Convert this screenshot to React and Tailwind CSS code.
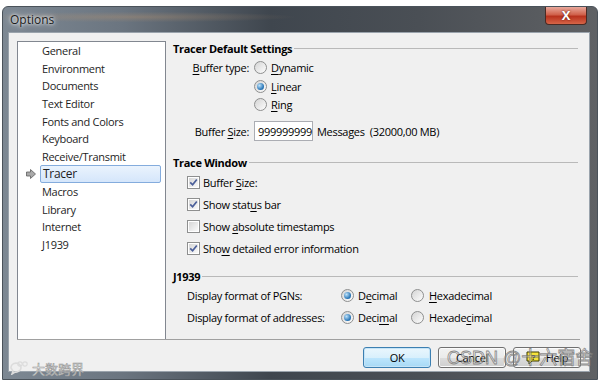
import React from 'react';

const listItems = [
  'General', 'Environment', 'Documents', 'Text Editor', 'Fonts and Colors', 'Keyboard',
  'Receive/Transmit', 'Tracer', 'Macros', 'Library', 'Internet', 'J1939',
];

const U = ({ children }) => <span className="underline underline-offset-[2px] decoration-[1px]">{children}</span>;

const Radio = ({ checked }) => (
  <span className="w-[13px] h-[13px] rounded-full border border-[#8e8f8f] bg-[linear-gradient(135deg,#d4d4d4,#fdfdfd)] flex items-center justify-center shrink-0">
    {checked && (
      <span className="w-[7px] h-[7px] rounded-full bg-[radial-gradient(circle_at_35%_35%,#bfe3fa,#2a77b8_65%,#18548a)]" />
    )}
  </span>
);

const Check = ({ checked }) => (
  <span className="w-[13px] h-[13px] border border-[#8e8f8f] bg-white p-[1px] shrink-0 flex">
    <span className="flex-1 bg-[linear-gradient(135deg,#d6d6d6,#fafafa)] flex items-center justify-center">
      {checked && (
        <svg width="9" height="9" viewBox="0 0 9 9">
          <path d="M1.2 4.3 L3.6 6.8 L7.8 1.4" stroke="#4b5f9a" strokeWidth="1.7" fill="none" />
        </svg>
      )}
    </span>
  </span>
);

const Header = ({ children }) => (
  <div className="h-[14px] flex items-center gap-[2px] font-bold text-black">
    <span>{children}</span>
    <div className="flex-1 h-px bg-[#b9b9b9]" />
  </div>
);

const Button = ({ children, primary }) => (
  <button
    className={
      primary
        ? 'w-[68px] h-[21px] rounded-[3px] border border-[#3c7fb1] bg-[linear-gradient(#eaf6fd,#d9f0fc_50%,#bee6fd_51%,#a7d9f5)] shadow-[inset_0_0_0_1px_#c5e4f7] flex items-center justify-center text-black'
        : 'w-[68px] h-[21px] rounded-[3px] border border-[#707070] bg-[linear-gradient(#f2f2f2,#ebebeb_50%,#dddddd_51%,#cfcfcf)] shadow-[inset_0_0_0_1px_#fbfbfb] flex items-center justify-center gap-[6px] text-black'
    }
  >
    {children}
  </button>
);

const App = () => {
  return (
    <div className="w-[602px] h-[382px] bg-white relative overflow-hidden pt-[6px] pl-[2px] pr-[4px] pb-[2px] font-['Open_Sans',sans-serif] text-[11px] tracking-[-0.3px] leading-none">
      <div className="h-full flex flex-col rounded-t-[6px] border border-[#4a525a] bg-[linear-gradient(90deg,#7d8893_0%,#6b7580_20%,#3f464e_45%,#4a4f55_70%,#5f6164_100%)]">
        <div className="h-[25px] flex items-start justify-between pl-[7px] pr-[10px] bg-[radial-gradient(ellipse_at_22%_40%,rgba(190,150,110,0.35),transparent_25%)]">
          <span className="mt-[7px] text-[12px] tracking-normal text-[#1b1b1b] [text-shadow:0_0_6px_#ffffff,0_0_3px_#ffffff]">Options</span>
          <div className="w-[42px] h-[18px] rounded-b-[4px] border border-t-0 border-[#4a2a24] bg-[linear-gradient(#e9a99c,#d0614b_45%,#b8321d_55%,#d66548)] flex items-center justify-center">
            <span className="font-bold text-[13px] text-white [text-shadow:0_0_2px_#5a1a10]">X</span>
          </div>
        </div>
        <div className="flex-1 ml-[5px] mr-[7px] mb-[7px] bg-[#f0f0f0] border border-[#9aa3ac] flex flex-col pt-[8px] pl-[8px] pr-[9px]">
          <div className="h-[299px] flex border-b border-[#a0a0a0]">
            <div className="w-[149px] bg-white border border-b-0 border-[#828790] flex flex-col text-[#1e1e1e]">
              {listItems.map((item) => (
                <div key={item} className="h-[17.6px] flex items-center relative">
                  {item === 'Tracer' ? (
                    <>
                      <svg className="absolute left-[8px] top-[4px]" width="10" height="10" viewBox="0 0 10 10">
                        <path d="M0.5 3 H4.5 V0.5 L9.5 5 L4.5 9.5 V7 H0.5 Z" fill="#a9a9a9" stroke="#5e5e5e" strokeWidth="0.8" />
                      </svg>
                      <div className="ml-[22px] mr-[4px] flex-1 h-full rounded-[2px] border border-[#84acdd] bg-[linear-gradient(#eaf3fd,#d5e6fb)] flex items-center pl-[2px]">
                        <span className="text-[12px]">{item}</span>
                      </div>
                    </>
                  ) : (
                    <span className="ml-[24px]">{item}</span>
                  )}
                </div>
              ))}
            </div>
            <div className="flex-1 pl-[7px] pr-[2px] flex flex-col text-black">
              <Header>Tracer Default Settings</Header>
              <div className="mt-[3px] flex">
                <div className="w-[77px] h-[19px] flex items-center justify-end pr-[1px]">
                  <span><U>B</U>uffer type:</span>
                </div>
                <div className="flex flex-col pl-[4px]">
                  <div className="h-[19px] flex items-center gap-[4px]"><Radio /><span><U>D</U>ynamic</span></div>
                  <div className="h-[18px] flex items-center gap-[4px]"><Radio checked /><span><U>L</U>inear</span></div>
                  <div className="h-[18px] flex items-center gap-[4px]"><Radio /><span><U>R</U>ing</span></div>
                </div>
              </div>
              <div className="mt-[8px] h-[20px] flex items-center">
                <div className="w-[77px] text-right pr-[1px]">Buffer <U>S</U>ize:</div>
                <div className="ml-[4px] w-[59px] h-[20px] bg-white border border-[#abadb3] flex items-center pl-[3px]">999999999</div>
                <span className="ml-[4px]">Messages &nbsp;(32000,00 MB)</span>
              </div>
              <div className="mt-[14px]"><Header>Trace Window</Header></div>
              <div className="mt-[2px] flex flex-col pl-[14px]">
                <div className="h-[22px] flex items-center gap-[3px]"><Check checked /><span>Buffer <U>S</U>ize:</span></div>
                <div className="h-[22px] flex items-center gap-[3px]"><Check checked /><span>Show stat<U>u</U>s bar</span></div>
                <div className="h-[22px] flex items-center gap-[3px]"><Check /><span>Show <U>a</U>bsolute timestamps</span></div>
                <div className="h-[22px] flex items-center gap-[3px]"><Check checked /><span>Sho<U>w</U> detailed error information</span></div>
              </div>
              <div className="mt-[10px]"><Header>J1939</Header></div>
              <div className="mt-[1px] flex flex-col pl-[14px]">
                <div className="h-[22px] flex items-center">
                  <span className="w-[154px]">Display format of PGNs:</span>
                  <Radio checked /><span className="ml-[4px] w-[53px]">D<U>e</U>cimal</span>
                  <Radio /><span className="ml-[5px]"><U>H</U>exadecimal</span>
                </div>
                <div className="h-[22px] flex items-center">
                  <span className="w-[154px]">Display format of addresses:</span>
                  <Radio checked /><span className="ml-[4px] w-[53px]">Deci<U>m</U>al</span>
                  <Radio /><span className="ml-[5px]">Hexade<U>c</U>imal</span>
                </div>
              </div>
            </div>
          </div>
          <div className="mt-[7px] flex justify-end gap-[7px] mr-[-1px]">
            <Button primary>OK</Button>
            <Button>Cancel</Button>
            <Button>
              <svg width="14" height="14" viewBox="0 0 14 14">
                <path d="M1 1 H13 V10 H6 L3 13 V10 H1 Z" fill="#f6e33a" stroke="#3a3a00" strokeWidth="1" />
                <text x="7" y="8.5" textAnchor="middle" fontSize="8" fontWeight="bold" fill="#222" fontFamily="Liberation Sans, sans-serif">?</text>
              </svg>
              <span>Help</span>
            </Button>
          </div>
        </div>
      </div>
      <div className="absolute left-[447px] top-[349px] text-[18px] leading-none tracking-normal font-['Liberation_Sans','Noto_Sans_CJK_SC',sans-serif] text-[rgba(255,255,255,0.35)] [-webkit-text-stroke:0.8px_rgba(110,110,110,0.8)] pointer-events-none">
        CSDN @十六宿舍
      </div>
      <div className="absolute left-[9px] top-[361px] flex items-center gap-[3px] pointer-events-none">
        <svg width="20" height="14" viewBox="0 0 20 14">
          <path d="M2 7 a5 4.5 0 1 1 4 4 L3 13 L4 10 Z" fill="none" stroke="#dcdcdc" strokeWidth="1.6" />
          <circle cx="11" cy="3" r="2.2" fill="none" stroke="#dcdcdc" strokeWidth="1.2" />
          <circle cx="16" cy="3" r="2.2" fill="none" stroke="#dcdcdc" strokeWidth="1.2" />
        </svg>
        <span className="text-[13px] tracking-normal font-['Noto_Sans_CJK_SC',sans-serif] text-[rgba(255,255,255,0.85)] [-webkit-text-stroke:0.6px_#9a9a9a]">大数跨界</span>
      </div>
    </div>
  );
};

export default App;
